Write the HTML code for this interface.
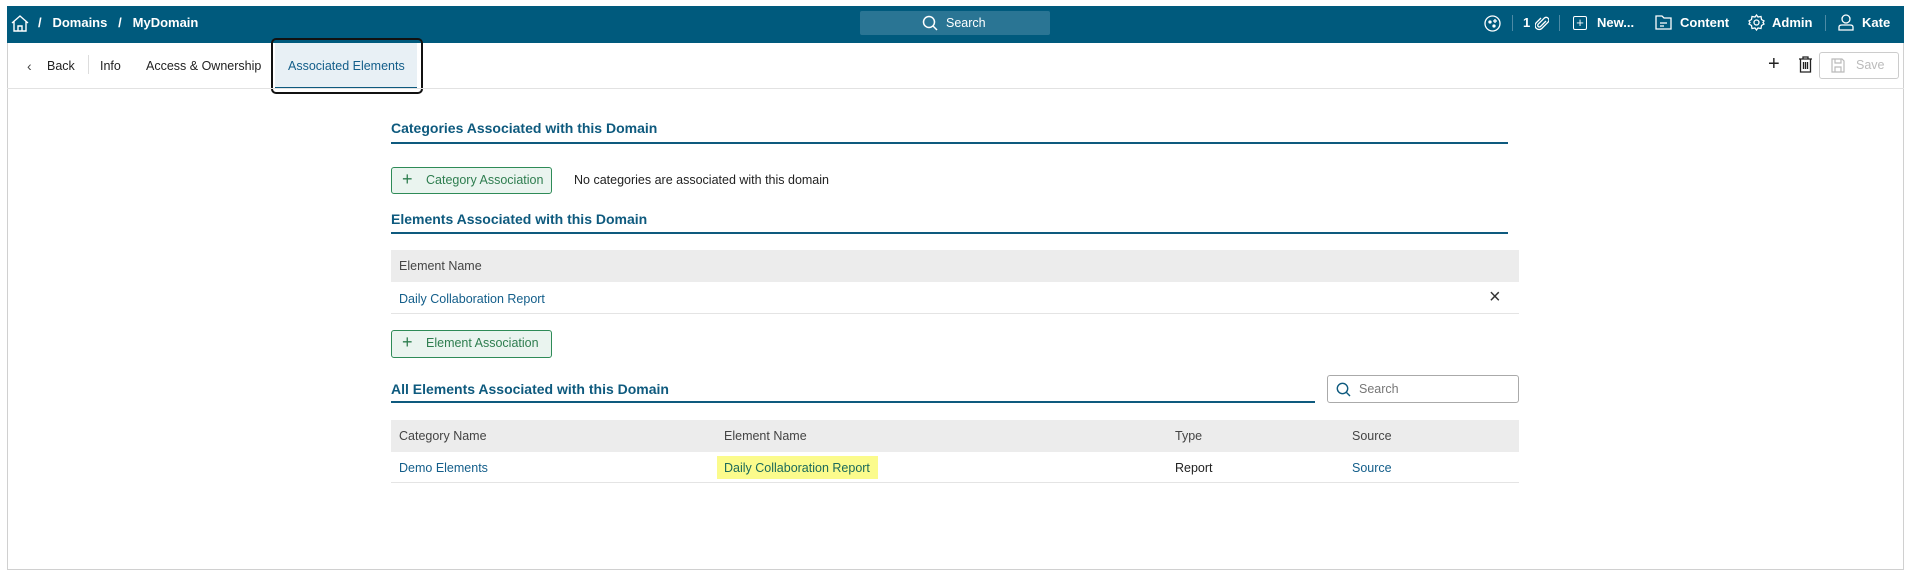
<!DOCTYPE html>
<html><head><meta charset="utf-8"><style>
*{box-sizing:border-box;margin:0;padding:0}
body{width:1910px;height:572px;background:#fff;font-family:"Liberation Sans",sans-serif;font-size:12.5px;color:#222;position:relative;overflow:hidden}
.a{position:absolute;white-space:nowrap}
.frame{position:absolute;left:7px;top:6px;width:1897px;height:564px;border:1px solid #d0d0d0;border-top:none}
.hdr{position:absolute;left:7px;top:6px;width:1897px;height:37px;background:#005a7d}
.w{color:#fff;font-weight:bold;font-size:13px}
.h{color:#0e5a7e;font-weight:bold;font-size:14px}
.ul{position:absolute;height:2px;background:#0e5a7e}
.btn{position:absolute;border:1px solid #2e8b57;background:#eaf4ef;border-radius:3px;color:#2e7d4f;font-size:12.5px;padding-left:34px;line-height:25px}
.btn:before{content:"+";position:absolute;left:10px;top:-1px;font-size:18px;font-weight:300}
.th{position:absolute;background:#ececec;left:391px;width:1128px}
.lnk{color:#135e8a}
</style></head><body>
<div class="frame"></div>
<div class="hdr"></div>
<svg class="a" style="left:11px;top:15px" width="18" height="17" viewBox="0 0 18 17" fill="none" stroke="#fff" stroke-width="1.4"><path d="M1 8 L9 1 L17 8 M3 6.5 V16 H15 V6.5 M7 16 V11 H11 V16"/></svg>
<div class="a w" style="left:38px;top:15px">/&nbsp;&nbsp; Domains &nbsp;&nbsp;/&nbsp;&nbsp; MyDomain</div>
<div class="a" style="left:860px;top:11px;width:190px;height:24px;background:#2a7594;border-radius:2px"></div>
<svg class="a" style="left:922px;top:15px" width="16" height="16" fill="none" stroke="#fff" stroke-width="1.5"><circle cx="7" cy="7" r="5.5"/><path d="M11 11 L15 15"/></svg>
<div class="a" style="left:946px;top:16px;color:#fff;font-size:12.5px">Search</div>
<svg class="a" style="left:1484px;top:15px" width="17" height="17" fill="none" stroke="#fff" stroke-width="1.3"><circle cx="8.5" cy="8.5" r="7.5"/><circle cx="6" cy="7" r="1" fill="#fff"/><circle cx="10" cy="11" r="1" fill="#fff"/><path d="M11 4 v4 M9 6 h4"/></svg>
<div class="a" style="left:1512px;top:15px;width:1px;height:16px;background:#4d8aa5"></div>
<div class="a w" style="left:1523px;top:15px">1</div>
<svg class="a" style="left:1535px;top:15px" width="14" height="16" fill="none" stroke="#fff" stroke-width="1.3"><path d="M11 6 L5.5 11.5 A1.6 1.6 0 0 1 3.2 9.2 L9.5 2.9 A2.8 2.8 0 0 1 13.4 6.8 L6.5 13.7 A4 4 0 0 1 0.9 8.1 L6 3"/></svg>
<div class="a" style="left:1559px;top:15px;width:1px;height:16px;background:#4d8aa5"></div>
<div class="a" style="left:1573px;top:16px;width:14px;height:14px;border:1.4px solid #fff;border-radius:2px;color:#fff;font-size:13px;line-height:11px;text-align:center">+</div>
<div class="a w" style="left:1597px;top:15px">New...</div>
<svg class="a" style="left:1655px;top:15px" width="17" height="15" fill="none" stroke="#fff" stroke-width="1.3"><path d="M1 1 H7 L9 3 H16 V14 H1 Z M5 8 H12 M5 11 H9"/></svg>
<div class="a w" style="left:1680px;top:15px">Content</div>
<svg class="a" style="left:1748px;top:14px" width="17" height="17" fill="none" stroke="#fff" stroke-width="1.3"><circle cx="8.5" cy="8.5" r="2.5"/><path d="M8.5 1 L10 3 L13 2.5 L13.5 5.5 L16 7 L15 8.5 L16 10 L13.5 11.5 L13 14.5 L10 14 L8.5 16 L7 14 L4 14.5 L3.5 11.5 L1 10 L2 8.5 L1 7 L3.5 5.5 L4 2.5 L7 3 Z"/></svg>
<div class="a w" style="left:1772px;top:15px">Admin</div>
<div class="a" style="left:1825px;top:15px;width:1px;height:16px;background:#4d8aa5"></div>
<svg class="a" style="left:1838px;top:14px" width="16" height="17" fill="none" stroke="#fff" stroke-width="1.3"><circle cx="8" cy="5" r="4"/><path d="M1 16 V13 Q1 11 4 11 H12 Q15 11 15 13 V16 Z"/></svg>
<div class="a w" style="left:1862px;top:15px">Kate</div>

<div class="a" style="left:27px;top:58px;font-size:14px;color:#444">&#8249;</div>
<div class="a" style="left:47px;top:59px">Back</div>
<div class="a" style="left:88px;top:55px;width:1px;height:19px;background:#ddd"></div>
<div class="a" style="left:100px;top:59px">Info</div>
<div class="a" style="left:146px;top:59px">Access &amp; Ownership</div>
<div class="a" style="left:275px;top:43px;width:142px;height:46px;background:#e8f0f5;border-bottom:2px solid #0e5a7e"></div>
<div class="a" style="left:271px;top:38px;width:152px;height:56px;border:2.5px solid #111;border-radius:5px"></div>
<div class="a lnk" style="left:288px;top:59px">Associated Elements</div>
<div class="a" style="left:7px;top:88px;width:1897px;height:1px;background:#e2e2e2"></div>
<div class="a" style="left:1768px;top:53px;font-size:20px;font-weight:300;color:#222">+</div>
<svg class="a" style="left:1798px;top:56px" width="15" height="17" fill="none" stroke="#222" stroke-width="1.3"><path d="M1 3 H14 M5 3 V1 H10 V3 M2.5 3 V16 H12.5 V3 M5.5 6 V13 M7.5 6 V13 M9.5 6 V13"/></svg>
<div class="a" style="left:1819px;top:52px;width:80px;height:27px;border:1px solid #ccc;border-radius:3px;color:#bbb;padding-left:36px;line-height:25px">Save</div>
<svg class="a" style="left:1831px;top:58px" width="14" height="15" fill="none" stroke="#bbb" stroke-width="1.2"><path d="M1 1 H11 L13 3 V14 H1 Z M4 1 V5 H10 V1 M4 14 V9 H10 V14"/></svg>

<div class="a h" style="left:391px;top:120px">Categories Associated with this Domain</div>
<div class="ul" style="left:391px;top:142px;width:1117px"></div>
<div class="btn" style="left:391px;top:167px;width:161px;height:27px">Category Association</div>
<div class="a" style="left:574px;top:173px">No categories are associated with this domain</div>
<div class="a h" style="left:391px;top:211px">Elements Associated with this Domain</div>
<div class="ul" style="left:391px;top:232px;width:1117px"></div>
<div class="th" style="top:250px;height:32px"></div>
<div class="a" style="left:399px;top:259px;color:#444">Element Name</div>
<div class="a lnk" style="left:399px;top:292px">Daily Collaboration Report</div>
<div class="a" style="left:1489px;top:286px;font-size:20px;font-weight:300;color:#333">&#215;</div>
<div class="a" style="left:391px;top:313px;width:1128px;height:1px;background:#e4e4e4"></div>
<div class="btn" style="left:391px;top:330px;width:161px;height:28px">Element Association</div>
<div class="a h" style="left:391px;top:381px">All Elements Associated with this Domain</div>
<div class="ul" style="left:391px;top:401px;width:924px"></div>
<div class="a" style="left:1327px;top:375px;width:192px;height:28px;border:1px solid #aaa;border-radius:3px"></div>
<svg class="a" style="left:1336px;top:382px" width="15" height="15" fill="none" stroke="#0e5a7e" stroke-width="1.4"><circle cx="6.5" cy="6.5" r="5.2"/><path d="M10.5 10.5 L14 14"/></svg>
<div class="a" style="left:1359px;top:382px;color:#777">Search</div>
<div class="th" style="top:420px;height:32px"></div>
<div class="a" style="left:399px;top:429px;color:#444">Category Name</div>
<div class="a" style="left:724px;top:429px;color:#444">Element Name</div>
<div class="a" style="left:1175px;top:429px;color:#444">Type</div>
<div class="a" style="left:1352px;top:429px;color:#444">Source</div>
<div class="a lnk" style="left:399px;top:461px">Demo Elements</div>
<div class="a" style="left:717px;top:456px;width:161px;height:23px;background:#fbfb8c"></div>
<div class="a lnk" style="left:724px;top:461px;color:#1b6a5a">Daily Collaboration Report</div>
<div class="a" style="left:1175px;top:461px">Report</div>
<div class="a lnk" style="left:1352px;top:461px">Source</div>
<div class="a" style="left:391px;top:482px;width:1128px;height:1px;background:#e4e4e4"></div>
</body></html>
